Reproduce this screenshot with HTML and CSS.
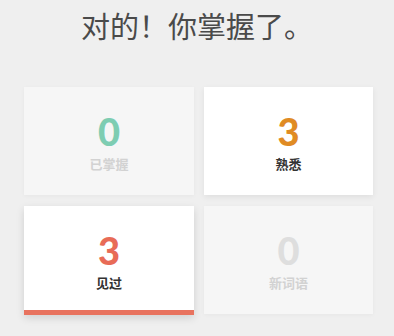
FILE: index.html
```html
<!DOCTYPE html>
<html lang="zh-CN">
<head>
<meta charset="utf-8">
<link rel="stylesheet" href="styles.css">
</head>
<body>
<h1 class="title">对的！你掌握了。</h1>
<div class="grid">
  <div class="card muted">
    <div class="num teal">0</div>
    <div class="label">已掌握</div>
  </div>
  <div class="card">
    <div class="num orange">3</div>
    <div class="label">熟悉</div>
  </div>
  <div class="card selected">
    <div class="num red">3</div>
    <div class="label">见过</div>
  </div>
  <div class="card muted">
    <div class="num grey">0</div>
    <div class="label">新词语</div>
  </div>
</div>
</body>
</html>
```
FILE: styles.css
```css
html, body {
  margin: 0;
  padding: 0;
  background: #efefef;
  width: 394px;
  height: 336px;
  overflow: hidden;
}
body {
  font-family: "Noto Sans CJK SC", sans-serif;
}
.title {
  margin: 0;
  height: 87px;
  padding-top: 5px;
  box-sizing: border-box;
  text-align: center;
  font-size: 29px;
  line-height: 40px;
  font-weight: 400;
  color: #4a4a4a;
}
.grid {
  display: grid;
  grid-template-columns: 170px 169px;
  grid-auto-rows: 108px;
  column-gap: 10px;
  row-gap: 11px;
  padding-left: 24px;
}
.card {
  background: #ffffff;
  box-shadow: 0 2px 6px rgba(0, 0, 0, 0.07);
  display: flex;
  flex-direction: column;
  align-items: center;
  padding-top: 29px;
  box-sizing: border-box;
}
.card.muted {
  background: #f6f6f6;
  box-shadow: 0 1px 4px rgba(0, 0, 0, 0.04);
}
.card.selected {
  border-bottom: 5px solid #e8735f;
  height: 109px;
  box-shadow: 0 3px 8px rgba(0, 0, 0, 0.13);
}
.num {
  font-family: "Lato", "DejaVu Sans", sans-serif;
  font-weight: 900;
  font-size: 38px;
  line-height: 30px;
}
.teal { color: #7ecdb2; }
.orange { color: #e08b24; }
.red { color: #e86b57; }
.grey { color: #dedede; }
.label {
  margin-top: 10px;
  font-size: 13px;
  line-height: 16px;
  font-weight: 700;
  color: #333333;
}
.muted .label {
  color: #d2d2d2;
}
```
